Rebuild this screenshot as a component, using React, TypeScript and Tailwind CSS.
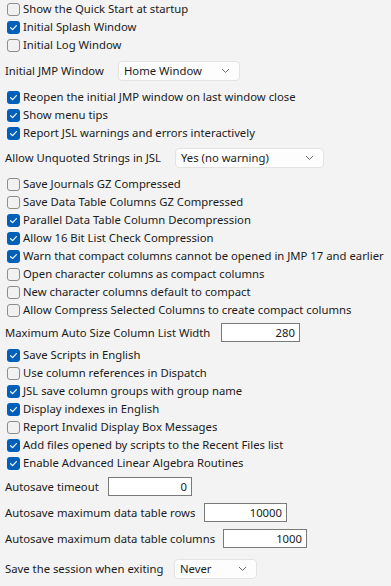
const Check = ({ on }: { on?: boolean }) =>
  on ? (
    <span className="flex h-[13px] w-[13px] shrink-0 items-center justify-center rounded-[3px] bg-[#005fb8]">
      <svg width="9" height="9" viewBox="0 0 9 9" fill="none">
        <path d="M1.6 4.7 L3.6 6.6 L7.4 2.6" stroke="white" strokeWidth="1.2" strokeLinecap="round" strokeLinejoin="round" />
      </svg>
    </span>
  ) : (
    <span className="h-[13px] w-[13px] shrink-0 rounded-[3px] border border-[#8d8d8d] bg-[#f1f1f1]" />
  );

const Row = ({ on, label }: { on?: boolean; label: string }) => (
  <div className="flex h-[18px] items-center gap-[3px] pl-[7px]">
    <Check on={on} />
    <span className="whitespace-nowrap">{label}</span>
  </div>
);

const Chevron = () => (
  <svg width="9" height="6" viewBox="0 0 9 6" fill="none">
    <path d="M1 1 L4.5 4.5 L8 1" stroke="#6b6b6b" strokeWidth="1" />
  </svg>
);

const Select = ({ value, w }: { value: string; w: string }) => (
  <div className={`flex h-[20px] shrink-0 items-center justify-between rounded-[4px] border border-[#e3e3e3] bg-[#fdfdfd] pl-[5px] pr-[9px] ${w}`}>
    <span className="whitespace-nowrap">{value}</span>
    <Chevron />
  </div>
);

const Field = ({ value, w }: { value: string; w: string }) => (
  <div className={`flex h-[19px] shrink-0 items-center justify-end border border-[#7a7a7a] bg-white px-[4px] ${w}`}>
    {value}
  </div>
);

const Label = ({ text, w }: { text: string; w: string }) => (
  <span className={`shrink-0 whitespace-nowrap ${w}`}>{text}</span>
);

export default function App() {
  return (
    <div
      className="h-[586px] w-[391px] overflow-hidden bg-[#f3f3f3] text-[11.3px] leading-none text-[#1b1b1b]"
      style={{ fontFamily: '"Segoe UI", "Noto Sans", sans-serif' }}
    >
      <div>
        <Row label="Show the Quick Start at startup" />
        <Row on label="Initial Splash Window" />
        <Row label="Initial Log Window" />
      </div>

      <div className="mt-[7px] flex items-center pl-[5px]">
        <Label text="Initial JMP Window" w="w-[113px]" />
        <Select value="Home Window" w="w-[122px]" />
      </div>

      <div className="mt-[7px]">
        <Row on label="Reopen the initial JMP window on last window close" />
        <Row on label="Show menu tips" />
        <Row on label="Report JSL warnings and errors interactively" />
      </div>

      <div className="mt-[6px] flex items-center pl-[5px]">
        <Label text="Allow Unquoted Strings in JSL" w="w-[170px]" />
        <Select value="Yes (no warning)" w="w-[149px]" />
      </div>

      <div className="mt-[7px]">
        <Row label="Save Journals GZ Compressed" />
        <Row label="Save Data Table Columns GZ Compressed" />
        <Row on label="Parallel Data Table Column Decompression" />
        <Row on label="Allow 16 Bit List Check Compression" />
        <Row on label="Warn that compact columns cannot be opened in JMP 17 and earlier" />
        <Row label="Open character columns as compact columns" />
        <Row label="New character columns default to compact" />
        <Row label="Allow Compress Selected Columns to create compact columns" />
      </div>

      <div className="mt-[4px] flex items-center pl-[5px]">
        <Label text="Maximum Auto Size Column List Width" w="w-[216px]" />
        <Field value="280" w="w-[79px]" />
      </div>

      <div className="mt-[4px]">
        <Row on label="Save Scripts in English" />
        <Row label="Use column references in Dispatch" />
        <Row on label="JSL save column groups with group name" />
        <Row on label="Display indexes in English" />
        <Row label="Report Invalid Display Box Messages" />
        <Row on label="Add files opened by scripts to the Recent Files list" />
        <Row on label="Enable Advanced Linear Algebra Routines" />
      </div>

      <div className="mt-[5px] flex items-center pl-[5px]">
        <Label text="Autosave timeout" w="w-[103px]" />
        <Field value="0" w="w-[84px]" />
      </div>
      <div className="mt-[7px] flex items-center pl-[5px]">
        <Label text="Autosave maximum data table rows" w="w-[199px]" />
        <Field value="10000" w="w-[83px]" />
      </div>
      <div className="mt-[7px] flex items-center pl-[5px]">
        <Label text="Autosave maximum data table columns" w="w-[218px]" />
        <Field value="1000" w="w-[84px]" />
      </div>
      <div className="mt-[11px] flex items-center pl-[5px]">
        <Label text="Save the session when exiting" w="w-[169px]" />
        <Select value="Never" w="w-[83px]" />
      </div>
    </div>
  );
}
